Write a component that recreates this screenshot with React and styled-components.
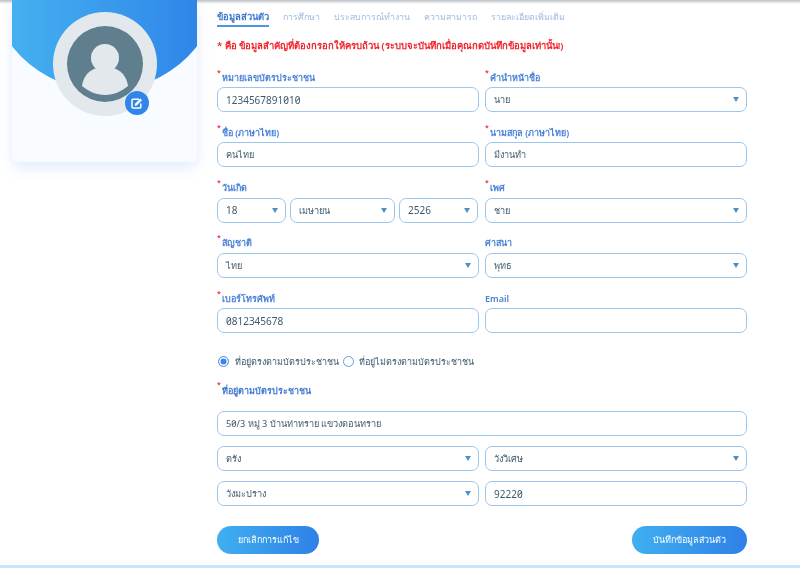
import React from "react"
import styled, { createGlobalStyle } from "styled-components"

const GlobalStyle = createGlobalStyle`
  html, body {
    margin: 0;
    background: #fff;
    overflow: hidden;
  }
  body {
    font-family: "Noto Sans", Inter, "Liberation Sans", sans-serif;
  }
`

const Page = styled.div`
  box-sizing: border-box;
  width: 800px;
  height: 568px;
  padding-left: 12px;
  display: flex;
  gap: 20px;
  overflow: hidden;
  border-bottom: 3px solid #c6e7fb;
  background: linear-gradient(180deg, rgba(90, 100, 110, 0.4) 0, rgba(90, 100, 110, 0) 4px);
  filter: blur(0.35px);
`

const Sidebar = styled.aside`
  width: 185px;
  flex: none;
`

const ProfileCard = styled.div`
  height: 162px;
  background: #f8fbff;
  border-radius: 0 0 6px 6px;
  box-shadow: 0 6px 14px rgba(120, 175, 240, 0.22);
`

const Banner = styled.div`
  height: 91px;
  background: linear-gradient(90deg, #45b0f1 0%, #2f86e8 100%);
  clip-path: circle(118px at 50% -27px);
`

const Avatar = styled.div`
  position: relative;
  box-sizing: border-box;
  width: 104px;
  height: 104px;
  margin: -79px auto 0;
  padding: 14px;
  border-radius: 50%;
  background: #e2e8ec;
`

const EditBadge = styled.span`
  position: absolute;
  right: 8px;
  bottom: 1px;
  width: 24px;
  height: 24px;
  border-radius: 50%;
  background: #2f86e8;
  display: flex;
  align-items: center;
  justify-content: center;
`

const Main = styled.main`
  width: 530px;
  flex: none;
  padding-top: 9px;
`

const Tabs = styled.nav`
  display: flex;
  gap: 14px;
  height: 18px;
`

const Tab = styled.span`
  height: 16px;
  font-size: ${p => (p.$active ? "9.4px" : "8.9px")};
  line-height: 16px;
  white-space: nowrap;
  font-weight: ${p => (p.$active ? 600 : 400)};
  color: ${p => (p.$active ? "#3f78cf" : "#9fbbe0")};
  border-bottom: ${p => (p.$active ? "2px solid #4f96dc" : "none")};
`

const Note = styled.p`
  margin: 12px 0 17.5px;
  height: 14px;
  font-size: 9.5px;
  line-height: 14px;
  font-weight: 600;
  color: #f0222c;
  white-space: nowrap;
`

const Rows = styled.div`
  display: flex;
  flex-direction: column;
  row-gap: 13.75px;
`

const Row = styled.div`
  display: grid;
  grid-template-columns: 262px 262px;
  column-gap: 6px;
`

const Label = styled.label`
  position: relative;
  display: block;
  height: 16.5px;
  padding-left: ${p => (p.$required ? "5px" : "0")};
  font-size: 9px;
  line-height: 13px;
  font-weight: 600;
  color: #4a82d8;
  white-space: nowrap;
  &::before {
    content: ${p => (p.$required ? '"*"' : "none")};
    position: absolute;
    left: 0;
    top: -5px;
    color: #f0222c;
    font-size: 7px;
  }
`

const Box = styled.div`
  box-sizing: border-box;
  height: 25px;
  padding: 0 7px 0 8px;
  display: flex;
  align-items: center;
  justify-content: space-between;
  background: #fff;
  border: 1.5px solid #9cc6ec;
  border-radius: 7px;
  font-size: ${p => (p.$digits ? "10px" : "9.2px")};
  font-feature-settings: "zero";
  color: #3d5a6c;
  white-space: nowrap;
`

const Caret = styled.span`
  width: 0;
  height: 0;
  border-left: 3px solid transparent;
  border-right: 3px solid transparent;
  border-top: 5px solid #4f8fc7;
`

const DateGroup = styled.div`
  display: grid;
  grid-template-columns: 69px 105px 79px;
  column-gap: 4px;
`

const RadioRow = styled.div`
  display: flex;
  align-items: center;
  height: 16px;
  margin: 20.5px 0 11.5px;
  font-size: 9px;
  color: #3d5a6c;
  white-space: nowrap;
`

const RadioDot = styled.span`
  box-sizing: border-box;
  width: 11px;
  height: 11px;
  margin: ${p => (p.$first ? "0 6px 0 1px" : "0 5px 0 3.5px")};
  border-radius: 50%;
  border: 1.5px solid #5f9fe0;
  background: ${p => (p.$on ? "#3a86e6" : "#fff")};
  box-shadow: ${p => (p.$on ? "inset 0 0 0 1.5px #fff" : "none")};
`

const AddressLabel = styled(Label)`
  height: 20px;
  margin-bottom: 10px;
  line-height: 20px;
  color: #3f78d0;
  &::before {
    top: -6px;
  }
`

const AddressRows = styled.div`
  display: flex;
  flex-direction: column;
  row-gap: 10px;
`

const Actions = styled.div`
  display: flex;
  justify-content: space-between;
  width: 530px;
  margin-top: 20px;
`

const Button = styled.button`
  width: ${p => p.$width}px;
  height: 28px;
  padding: 0;
  border: none;
  border-radius: 14px;
  background: linear-gradient(90deg, #3fb0f0 0%, #2f80e6 100%);
  color: #fff;
  font-family: inherit;
  font-size: 9px;
  font-weight: 500;
  white-space: nowrap;
`

const PersonIcon = () => (
  <svg width="76" height="76" viewBox="0 0 76 76">
    <circle cx="38" cy="38" r="38" fill="#5f7f8f" />
    <circle cx="38" cy="32" r="14" fill="#e2e8ec" />
    <path d="M15 60c2-14 12-19 23-19s21 5 23 19c-6 5-14 9-23 9s-17-4-23-9z" fill="#e2e8ec" />
  </svg>
)

const EditIcon = () => (
  <svg width="13" height="13" viewBox="0 0 13 13">
    <path d="M9 2.2H3a1 1 0 0 0-1 1V10a1 1 0 0 0 1 1h6.800a1 1 0 0 0 1-1V6.500" fill="none" stroke="#fff" strokeWidth="1.500" />
    <path d="M5 6.800 10.300 1.500l1.700 1.700L6.700 8.500 4.700 8.800z" fill="#fff" />
  </svg>
)

const TextField = ({ value, digits }) => <Box $digits={digits}>{value}</Box>

const SelectField = ({ value, digits }) => (
  <Box $digits={digits}>
    {value}
    <Caret />
  </Box>
)

const tabs = ["ข้อมูลส่วนตัว", "การศึกษา", "ประสบการณ์ทำงาน", "ความสามารถ", "รายละเอียดเพิ่มเติม"]

const App = () => (
  <Page>
    <GlobalStyle />
    <Sidebar>
      <ProfileCard>
        <Banner />
        <Avatar>
          <PersonIcon />
          <EditBadge>
            <EditIcon />
          </EditBadge>
        </Avatar>
      </ProfileCard>
    </Sidebar>
    <Main>
      <Tabs>
        {tabs.map((tab, i) => (
          <Tab key={tab} $active={i === 0}>
            {tab}
          </Tab>
        ))}
      </Tabs>
      <Note>* คือ ข้อมูลสำคัญที่ต้องกรอกให้ครบถ้วน (ระบบจะบันทึกเมื่อคุณกดบันทึกข้อมูลเท่านั้น!)</Note>
      <Rows>
        <Row>
          <div>
            <Label $required>หมายเลขบัตรประชาชน</Label>
            <TextField digits value="1234567891010" />
          </div>
          <div>
            <Label $required>คำนำหน้าชื่อ</Label>
            <SelectField value="นาย" />
          </div>
        </Row>
        <Row>
          <div>
            <Label $required>ชื่อ (ภาษาไทย)</Label>
            <TextField value="คนไทย" />
          </div>
          <div>
            <Label $required>นามสกุล (ภาษาไทย)</Label>
            <TextField value="มีงานทำ" />
          </div>
        </Row>
        <Row>
          <div>
            <Label $required>วันเกิด</Label>
            <DateGroup>
              <SelectField digits value="18" />
              <SelectField value="เมษายน" />
              <SelectField digits value="2526" />
            </DateGroup>
          </div>
          <div>
            <Label $required>เพศ</Label>
            <SelectField value="ชาย" />
          </div>
        </Row>
        <Row>
          <div>
            <Label $required>สัญชาติ</Label>
            <SelectField value="ไทย" />
          </div>
          <div>
            <Label>ศาสนา</Label>
            <SelectField value="พุทธ" />
          </div>
        </Row>
        <Row>
          <div>
            <Label $required>เบอร์โทรศัพท์</Label>
            <TextField digits value="0812345678" />
          </div>
          <div>
            <Label>Email</Label>
            <TextField value="" />
          </div>
        </Row>
      </Rows>
      <RadioRow>
        <RadioDot $on $first />
        ที่อยู่ตรงตามบัตรประชาชน
        <RadioDot />
        ที่อยู่ไม่ตรงตามบัตรประชาชน
      </RadioRow>
      <AddressLabel $required>ที่อยู่ตามบัตรประชาชน</AddressLabel>
      <AddressRows>
        <TextField value="50/3 หมู่ 3 บ้านท่าทราย แขวงดอนทราย" />
        <Row>
          <SelectField value="ตรัง" />
          <SelectField value="วังวิเศษ" />
        </Row>
        <Row>
          <SelectField value="วังมะปราง" />
          <TextField digits value="92220" />
        </Row>
      </AddressRows>
      <Actions>
        <Button $width={102}>ยกเลิกการแก้ไข</Button>
        <Button $width={115}>บันทึกข้อมูลส่วนตัว</Button>
      </Actions>
    </Main>
  </Page>
)

export default App
